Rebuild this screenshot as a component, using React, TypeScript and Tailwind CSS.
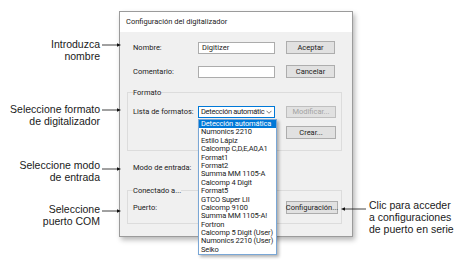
import React from 'react';

const formats = [
  'Detección automática',
  'Numonics 2210',
  'Estilo Lápiz',
  'Calcomp C,D,E,A0,A1',
  'Format1',
  'Format2',
  'Summa MM 1105-A',
  'Calcomp 4 Digit',
  'Format5',
  'GTCO Super LII',
  'Calcomp 9100',
  'Summa MM 1105-A!',
  'Fortron',
  'Calcomp 5 Digit (User)',
  'Numonics 2210 (User)',
  'Seiko',
];

const leftNotes = [
  { top: 39, lines: ['Introduzca', 'nombre'] },
  { top: 104, lines: ['Seleccione formato', 'de digitalizador'] },
  { top: 160, lines: ['Seleccione modo', 'de entrada'] },
  { top: 204, lines: ['Seleccione', 'puerto COM'] },
];

function WinButton({ label, className = '' }: { label: string; className?: string }) {
  return (
    <div
      className={`flex items-center justify-center bg-[#e1e1e1] border border-[#adadad] text-[7.5px] leading-none ${className}`}
    >
      {label}
    </div>
  );
}

export default function App() {
  return (
    <div className="relative w-[462px] h-[278px] overflow-hidden bg-white">
      {/* Dialog */}
      <div className="ml-[119px] mt-[11px] w-[234px] h-[226px] flex flex-col border border-[#9b9b9b] bg-[#f0f0f0] shadow-[2px_3px_5px_rgba(0,0,0,0.28)] font-['Roboto',sans-serif] text-[7.5px] text-[#1b1b1b]">
        <div className="h-[20px] shrink-0 bg-white pl-[6px] flex items-center">Configuración del digitalizador</div>

        <div className="flex-1 pl-[7px]">
          {/* Nombre */}
          <div className="mt-[9px] pl-[6px] flex items-center h-[13px]">
            <span className="w-[65px]">Nombre:</span>
            <div className="w-[77px] h-[12px] bg-white border border-[#acacac] flex items-center pl-[3px]">Digitizer</div>
            <WinButton label="Aceptar" className="ml-[11px] w-[49px] h-[13px] border-[#0078d7]" />
          </div>

          {/* Comentario */}
          <div className="mt-[11px] pl-[6px] flex items-center h-[13px]">
            <span className="w-[65px]">Comentario:</span>
            <div className="w-[77px] h-[12px] bg-white border border-[#acacac]" />
            <WinButton label="Cancelar" className="ml-[11px] w-[49px] h-[13px]" />
          </div>

          {/* Formato group */}
          <fieldset className="mt-[10px] w-[215px] border border-[#dcdcdc] pl-[5px] pr-[5px] pb-[11px]">
            <legend className="leading-[9px] text-[7.5px]">Formato</legend>
            <div className="mt-[9px] flex items-center h-[12px]">
              <span className="w-[65px]">Lista de formatos:</span>
              <div className="w-[77px] h-[12px] bg-white border border-[#0078d7] flex items-center justify-between pl-[2px] whitespace-nowrap tracking-[-0.3px]">
                <span>Detección automátic</span>
                <svg width="6" height="4" viewBox="0 0 6 4" className="mr-[2px] shrink-0">
                  <path d="M0.5 0.8 L3 3.3 L5.5 0.8" fill="none" stroke="#555" strokeWidth="0.8" />
                </svg>
              </div>
              <WinButton
                label="Modificar..."
                className="ml-[11px] w-[50px] h-[12px] bg-[#cccccc] border-[#bfbfbf] text-[#a3a3a3]"
              />
            </div>
            <div className="mt-[8px] flex justify-end">
              <WinButton label="Crear..." className="w-[50px] h-[13px]" />
            </div>
          </fieldset>

          {/* Modo de entrada */}
          <div className="mt-[11px] pl-[6px] h-[12px] flex items-center">Modo de entrada:</div>

          {/* Conectado group */}
          <fieldset className="mt-[12px] w-[215px] border border-[#dcdcdc] pl-[5px] pr-[3px] pb-[9px]">
            <legend className="leading-[9px] text-[7.5px]">Conectado a...</legend>
            <div className="mt-[6px] flex items-center h-[13px]">
              <span className="w-[153px]">Puerto:</span>
              <WinButton label="Configuración..." className="w-[52px] h-[13px]" />
            </div>
          </fieldset>
        </div>
      </div>

      {/* Open drop-down list */}
      <div className="absolute left-[198px] top-[119px] w-[79px] h-[136px] bg-white border border-[#7aa7d6] shadow-[2px_2px_3px_rgba(0,0,0,0.3)] font-['Roboto',sans-serif] text-[7.5px] tracking-[-0.15px] text-[#1b1b1b]">
        {formats.map((f, i) => (
          <div
            key={f}
            className={`h-[8.4px] leading-[8.4px] pl-[2px] whitespace-nowrap ${i === 0 ? 'bg-[#0078d7] text-white' : ''}`}
          >
            {f}
          </div>
        ))}
      </div>

      {/* Callout texts */}
      {leftNotes.map((n) => (
        <div
          key={n.lines[0]}
          className="absolute left-0 w-[100px] text-right font-['Liberation_Sans',Arial,sans-serif] text-[10.5px] leading-[11.5px] text-[#1a1a1a]"
          style={{ top: n.top }}
        >
          {n.lines.map((l) => (
            <div key={l}>{l}</div>
          ))}
        </div>
      ))}
      <div className="absolute left-[369px] top-[199px] font-['Liberation_Sans',Arial,sans-serif] text-[10.5px] leading-[12px] text-[#1a1a1a]">
        <div>Clic para acceder</div>
        <div>a configuraciones</div>
        <div>de puerto en serie</div>
      </div>

      {/* Callout arrows */}
      <svg className="absolute inset-0 pointer-events-none" width="462" height="278">
        {[45, 110, 169, 211].map((y) => (
          <g key={y}>
            <line x1="102" y1={y} x2="118" y2={y} stroke="#111" strokeWidth="0.8" />
            <polygon points={`117,${y - 1.8} 121,${y} 117,${y + 1.8}`} fill="#111" />
          </g>
        ))}
        <line x1="344" y1="209" x2="366" y2="209" stroke="#111" strokeWidth="0.8" />
        <polygon points="345,207.2 341,209 345,210.8" fill="#111" />
      </svg>
    </div>
  );
}
